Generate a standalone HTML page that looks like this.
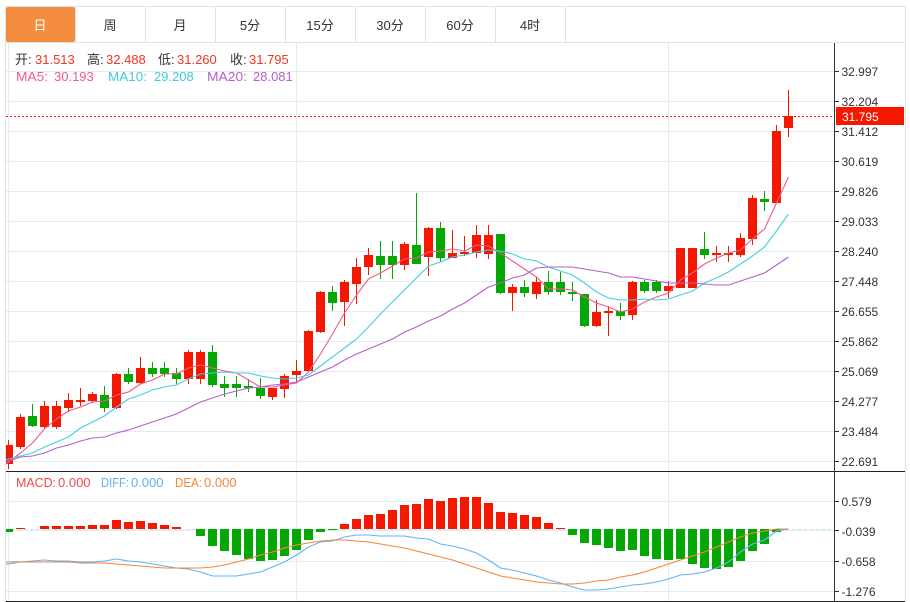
<!DOCTYPE html>
<html lang="zh">
<head>
<meta charset="utf-8">
<title>K</title>
<style>
html,body{margin:0;padding:0;background:#fff;width:910px;height:602px;overflow:hidden}
svg{display:block}
text{font-family:"Liberation Sans","Noto Sans CJK SC",sans-serif;font-size:13px}
.ax text{font-size:12px;fill:#333}
.tab text{font-size:13px;fill:#333;text-anchor:middle}
.r{fill:#f43422}.k{fill:#333}
.line{fill:none;stroke-width:1.1;stroke-linejoin:round}
</style>
</head>
<body>
<svg width="910" height="602" viewBox="0 0 910 602" xmlns="http://www.w3.org/2000/svg">
<defs><clipPath id="c"><rect x="6" y="43" width="828" height="558"/></clipPath></defs>

<!-- grid -->
<path shape-rendering="crispEdges" fill="#e3ecf1" d="M6 71h828v1H6zM6 101h828v1H6zM6 131h828v1H6zM6 161h828v1H6zM6 191h828v1H6zM6 221h828v1H6zM6 251h828v1H6zM6 281h828v1H6zM6 311h828v1H6zM6 341h828v1H6zM6 371h828v1H6zM6 401h828v1H6zM6 431h828v1H6zM6 461h828v1H6zM6 501h828v1H6zM6 530h828v1H6zM6 561h828v1H6zM6 591h828v1H6zM8 43h1v558H8zM296 43h1v558h-1zM668 43h1v558h-1z"/>

<!-- frame -->
<path shape-rendering="crispEdges" fill="#dfe3e6" d="M5 6h901v1H5zM5 42h901v1H5zM5 6h1v596H5zM905 6h1v596h-1zM75 7h1v35h-1zM145 7h1v35h-1zM215 7h1v35h-1zM285 7h1v35h-1zM355 7h1v35h-1zM425 7h1v35h-1zM495 7h1v35h-1zM565 7h1v35h-1z"/>

<!-- tabs -->
<rect x="6" y="7" width="69" height="35" rx="2" fill="#f48c3f"/>
<g class="tab">
<text x="40" y="30" style="fill:#fff">日</text>
<text x="110" y="30">周</text>
<text x="180" y="30">月</text>
<text x="250" y="30">5分</text>
<text x="320" y="30">15分</text>
<text x="390" y="30">30分</text>
<text x="460" y="30">60分</text>
<text x="530" y="30">4时</text>
</g>

<!-- candles -->
<g clip-path="url(#c)" shape-rendering="crispEdges">
<path fill="#f41800" d="M4 445h9V464H4zM8 440h1V469H8zM16 417h9V447h-9zM20 414h1V449h-1zM40 406h9V427h-9zM44 401h1V428h-1zM52 406h9V427h-9zM56 401h1V429h-1zM64 400h9V408h-9zM68 393h1V412h-1zM76 400h9V402h-9zM80 388h1V406h-1zM88 394h9V401h-9zM92 392h1V403h-1zM112 374h9V408h-9zM116 373h1V409h-1zM136 368h9V383h-9zM140 357h1V384h-1zM184 352h9V379h-9zM188 350h1V384h-1zM196 352h9V379h-9zM200 350h1V384h-1zM268 388h9V397h-9zM272 388h1V400h-1zM280 376h9V389h-9zM284 374h1V398h-1zM292 371h9V375h-9zM296 360h1V383h-1zM304 331h9V371h-9zM308 330h1V372h-1zM316 292h9V332h-9zM320 291h1V333h-1zM340 282h9V302h-9zM344 280h1V326h-1zM352 267h9V284h-9zM356 258h1V304h-1zM364 255h9V267h-9zM368 248h1V275h-1zM400 244h9V265h-9zM404 242h1V270h-1zM424 228h9V257h-9zM428 227h1V276h-1zM448 253h9V258h-9zM452 230h1V258h-1zM460 252h9V254h-9zM464 236h1V256h-1zM472 235h9V253h-9zM476 225h1V258h-1zM484 235h9V254h-9zM488 225h1V259h-1zM508 287h9V293h-9zM512 284h1V311h-1zM532 282h9V294h-9zM536 277h1V299h-1zM592 312h9V326h-9zM596 300h1V327h-1zM604 311h9V313h-9zM608 306h1V336h-1zM628 282h9V315h-9zM632 281h1V320h-1zM664 286h9V291h-9zM668 281h1V298h-1zM676 248h9V288h-9zM688 248h9V288h-9zM712 253h9V255h-9zM716 246h1V262h-1zM724 253h9V255h-9zM728 246h1V262h-1zM736 238h9V255h-9zM740 233h1V257h-1zM748 198h9V239h-9zM752 195h1V245h-1zM772 131h9V203h-9zM776 125h1V203h-1zM784 116h9V128h-9zM788 90h1V137h-1z"/>
<path fill="#04a704" d="M28 416h9V426h-9zM32 404h1V427h-1zM100 395h9V408h-9zM104 386h1V412h-1zM124 374h9V382h-9zM128 368h1V384h-1zM148 368h9V374h-9zM152 362h1V377h-1zM160 368h9V374h-9zM164 362h1V377h-1zM172 373h9V379h-9zM176 368h1V384h-1zM208 352h9V385h-9zM212 345h1V387h-1zM220 384h9V388h-9zM224 376h1V397h-1zM232 384h9V388h-9zM236 376h1V397h-1zM244 386h9V388h-9zM248 379h1V392h-1zM256 388h9V396h-9zM260 378h1V399h-1zM328 292h9V303h-9zM332 286h1V311h-1zM376 256h9V265h-9zM380 241h1V279h-1zM388 256h9V265h-9zM392 241h1V279h-1zM412 245h9V264h-9zM416 193h1V264h-1zM436 228h9V258h-9zM440 222h1V262h-1zM496 234h9V293h-9zM500 234h1V294h-1zM520 287h9V293h-9zM524 280h1V297h-1zM544 282h9V292h-9zM548 271h1V295h-1zM556 282h9V292h-9zM560 272h1V295h-1zM568 292h9V294h-9zM572 282h1V301h-1zM580 294h9V326h-9zM584 294h1V327h-1zM616 311h9V316h-9zM620 303h1V320h-1zM640 282h9V291h-9zM644 280h1V293h-1zM652 282h9V291h-9zM656 280h1V293h-1zM700 249h9V255h-9zM704 232h1V259h-1zM760 199h9V202h-9zM764 191h1V211h-1z"/>
</g>

<!-- MA lines -->
<g clip-path="url(#c)">
<polyline class="line" stroke="#ef5b8d" points="6,464 8.5,462 20.5,453 32.5,443 44.5,429 56.5,419 68.5,411 80.5,407 92.5,402 104.5,401 116.5,395 128.5,392 140.5,384 152.5,380 164.5,374 176.5,374 188.5,368 200.5,365 212.5,368 224.5,371 236.5,373 248.5,380 260.5,387 272.5,387 284.5,385 296.5,383 308.5,372 320.5,354 332.5,334 344.5,313 356.5,295 368.5,279 380.5,273 392.5,266 404.5,259 416.5,258 428.5,252 440.5,251 452.5,249 464.5,251 476.5,245 488.5,246 500.5,253 512.5,261 524.5,269 536.5,277 548.5,289 560.5,289 572.5,290 584.5,297 596.5,303 608.5,307 620.5,312 632.5,309 644.5,302 656.5,297 668.5,293 680.5,280 692.5,273 704.5,264 716.5,258 728.5,253 740.5,250 752.5,239 764.5,229 776.5,203 788.5,177"/>
<polyline class="line" stroke="#45cfe2" points="6,460 8.5,459 20.5,456 32.5,453 44.5,447 56.5,442 68.5,437 80.5,428 92.5,422 104.5,416 116.5,407 128.5,399 140.5,395 152.5,390 164.5,387 176.5,385 188.5,379 200.5,374 212.5,373 224.5,372 236.5,373 248.5,373 260.5,376 272.5,378 284.5,379 296.5,378 308.5,375 320.5,366 332.5,357 344.5,348 356.5,339 368.5,327 380.5,314 392.5,302 404.5,290 416.5,278 428.5,266 440.5,262 452.5,257 464.5,255 476.5,252 488.5,250 500.5,251 512.5,254 524.5,259 536.5,261 548.5,267 560.5,271 572.5,275 584.5,283 596.5,292 608.5,298 620.5,300 632.5,300 644.5,299 656.5,300 668.5,299 680.5,295 692.5,291 704.5,283 716.5,278 728.5,272 740.5,264 752.5,256 764.5,247 776.5,231 788.5,214"/>
<polyline class="line" stroke="#b55fca" points="6,462 8.5,461 20.5,457 32.5,456 44.5,453 56.5,448 68.5,445 80.5,441 92.5,438 104.5,437 116.5,433 128.5,430 140.5,426 152.5,422 164.5,418 176.5,414 188.5,408 200.5,402 212.5,398 224.5,394 236.5,391 248.5,388 260.5,387 272.5,385 284.5,384 296.5,382 308.5,377 320.5,372 332.5,367 344.5,360 356.5,354 368.5,349 380.5,344 392.5,339 404.5,332 416.5,327 428.5,321 440.5,316 452.5,309 464.5,303 476.5,295 488.5,287 500.5,283 512.5,278 524.5,275 536.5,268 548.5,267 560.5,267 572.5,267 584.5,269 596.5,271 608.5,273 620.5,277 632.5,277 644.5,279 656.5,281 668.5,283 680.5,283 692.5,283 704.5,284 716.5,285 728.5,285 740.5,281 752.5,277 764.5,273 776.5,265 788.5,257"/>
</g>

<!-- last price line -->
<line x1="6" y1="116.5" x2="834" y2="116.5" stroke="#f41800" stroke-width="1" stroke-dasharray="2 2"/>

<!-- MACD -->
<line x1="6" y1="529.5" x2="834" y2="529.5" stroke="#bfe3f1" stroke-width="1" stroke-dasharray="3 3"/>
<g clip-path="url(#c)" shape-rendering="crispEdges">
<path fill="#f41800" d="M16 528h9v1h-9zM40 526h9v3h-9zM52 526h9v3h-9zM64 526h9v3h-9zM76 526h9v3h-9zM88 525h9v4h-9zM100 525h9v4h-9zM112 520h9v9h-9zM124 522h9v7h-9zM136 521h9v8h-9zM148 523h9v6h-9zM160 525h9v4h-9zM172 527h9v2h-9zM340 524h9v5h-9zM352 519h9v10h-9zM364 515h9v14h-9zM376 514h9v15h-9zM388 510h9v19h-9zM400 505h9v24h-9zM412 504h9v25h-9zM424 499h9v30h-9zM436 501h9v28h-9zM448 498h9v31h-9zM460 497h9v32h-9zM472 497h9v32h-9zM484 503h9v26h-9zM496 512h9v17h-9zM508 513h9v16h-9zM520 515h9v14h-9zM532 517h9v12h-9zM544 523h9v6h-9zM556 528h9v1h-9z"/>
<path fill="#04a704" d="M6 529h7V532H6zM196 529h9V536h-9zM208 529h9V546h-9zM220 529h9V551h-9zM232 529h9V555h-9zM244 529h9V559h-9zM256 529h9V561h-9zM268 529h9V560h-9zM280 529h9V556h-9zM292 529h9V550h-9zM304 529h9V540h-9zM316 529h9V532h-9zM328 529h9V530h-9zM568 529h9V535h-9zM580 529h9V543h-9zM592 529h9V545h-9zM604 529h9V548h-9zM616 529h9V551h-9zM628 529h9V550h-9zM640 529h9V556h-9zM652 529h9V559h-9zM664 529h9V560h-9zM676 529h9V559h-9zM688 529h9V564h-9zM700 529h9V568h-9zM712 529h9V569h-9zM724 529h9V567h-9zM736 529h9V561h-9zM748 529h9V551h-9zM760 529h9V544h-9zM772 529h9V532h-9z"/>
</g>
<g clip-path="url(#c)">
<polyline class="line" stroke="#63b4f6" points="6,564 8.5,564 20.5,562 32.5,561 44.5,560 56.5,561 68.5,561 80.5,562 92.5,562 104.5,561 116.5,559 128.5,561 140.5,562 152.5,564 164.5,566 176.5,568 188.5,569 200.5,572 212.5,576 224.5,576 236.5,576 248.5,574 260.5,572 272.5,567 284.5,562 296.5,555 308.5,547 320.5,542 332.5,541 344.5,537 356.5,535 368.5,535 380.5,536 392.5,536 404.5,536 416.5,538 428.5,539 440.5,544 452.5,546 464.5,549 476.5,553 488.5,560 500.5,568 512.5,570 524.5,573 536.5,576 548.5,580 560.5,583 572.5,587 584.5,590 596.5,590 608.5,589 620.5,587 632.5,585 644.5,584 656.5,582 668.5,579 680.5,575 692.5,574 704.5,572 716.5,568 728.5,562 740.5,552 752.5,544 764.5,540 776.5,531 788.5,529"/>
<polyline class="line" stroke="#f5863a" points="6,562 8.5,562 20.5,562 32.5,562 44.5,562 56.5,562 68.5,562 80.5,563 92.5,563 104.5,563 116.5,564 128.5,565 140.5,566 152.5,567 164.5,568 176.5,568 188.5,568 200.5,568 212.5,567 224.5,565 236.5,562 248.5,559 260.5,555 272.5,552 284.5,548 296.5,545 308.5,543 320.5,541 332.5,540 344.5,540 356.5,541 368.5,542 380.5,544 392.5,546 404.5,548 416.5,551 428.5,554 440.5,557 452.5,560 464.5,564 476.5,568 488.5,572 500.5,576 512.5,578 524.5,580 536.5,582 548.5,583 560.5,584 572.5,584 584.5,583 596.5,581 608.5,580 620.5,577 632.5,575 644.5,572 656.5,568 668.5,564 680.5,560 692.5,556 704.5,552 716.5,547 728.5,542 740.5,537 752.5,533 764.5,531 776.5,529 788.5,529"/>
</g>

<!-- dividers -->
<path shape-rendering="crispEdges" fill="#222" d="M6 471h899v1H6zM6 601h899v1H6z"/>
<path shape-rendering="crispEdges" fill="#333" d="M834 43h1v558h-1zM835 71h4v1h-4zM835 101h4v1h-4zM835 131h4v1h-4zM835 161h4v1h-4zM835 191h4v1h-4zM835 221h4v1h-4zM835 251h4v1h-4zM835 281h4v1h-4zM835 311h4v1h-4zM835 341h4v1h-4zM835 371h4v1h-4zM835 401h4v1h-4zM835 431h4v1h-4zM835 461h4v1h-4zM835 501h4v1h-4zM835 530h4v1h-4zM835 561h4v1h-4zM835 591h4v1h-4z"/>

<!-- axis labels -->
<g class="ax">
<text x="841.5" y="76">32.997</text>
<text x="841.5" y="106">32.204</text>
<text x="841.5" y="136">31.412</text>
<text x="841.5" y="166">30.619</text>
<text x="841.5" y="196">29.826</text>
<text x="841.5" y="226">29.033</text>
<text x="841.5" y="256">28.240</text>
<text x="841.5" y="286">27.448</text>
<text x="841.5" y="316">26.655</text>
<text x="841.5" y="346">25.862</text>
<text x="841.5" y="376">25.069</text>
<text x="841.5" y="406">24.277</text>
<text x="841.5" y="436">23.484</text>
<text x="841.5" y="466">22.691</text>
<text x="841.5" y="506">0.579</text>
<text x="841.5" y="536">-0.039</text>
<text x="841.5" y="566">-0.658</text>
<text x="841.5" y="596">-1.276</text>
</g>

<!-- price tag -->
<rect x="836" y="107" width="68" height="18" fill="#f41800" shape-rendering="crispEdges"/>
<text x="842" y="121" style="font-size:12px;fill:#fff">31.795</text>

<!-- legends -->
<text x="15" y="64" class="k">开:</text><text x="35" y="64" class="r">31.513</text>
<text x="87" y="64" class="k">高:</text><text x="106" y="64" class="r">32.488</text>
<text x="158" y="64" class="k">低:</text><text x="177" y="64" class="r">31.260</text>
<text x="230" y="64" class="k">收:</text><text x="249" y="64" class="r">31.795</text>

<text x="16" y="81" fill="#ef5b8d" textLength="32" lengthAdjust="spacingAndGlyphs">MA5:</text><text x="54" y="81" fill="#ef5b8d">30.193</text>
<text x="108" y="81" fill="#3fcbde" textLength="39" lengthAdjust="spacingAndGlyphs">MA10:</text><text x="154" y="81" fill="#3fcbde">29.208</text>
<text x="207" y="81" fill="#b55fca" textLength="40" lengthAdjust="spacingAndGlyphs">MA20:</text><text x="253" y="81" fill="#b55fca">28.081</text>

<text x="16" y="487" fill="#f04a4a" textLength="40" lengthAdjust="spacingAndGlyphs">MACD:</text><text x="58" y="487" fill="#f04a4a">0.000</text>
<text x="101" y="487" fill="#5fb2f5" textLength="28" lengthAdjust="spacingAndGlyphs">DIFF:</text><text x="131" y="487" fill="#5fb2f5">0.000</text>
<text x="175" y="487" fill="#f5863a" textLength="27" lengthAdjust="spacingAndGlyphs">DEA:</text><text x="204" y="487" fill="#f5863a">0.000</text>
</svg>
</body>
</html>
